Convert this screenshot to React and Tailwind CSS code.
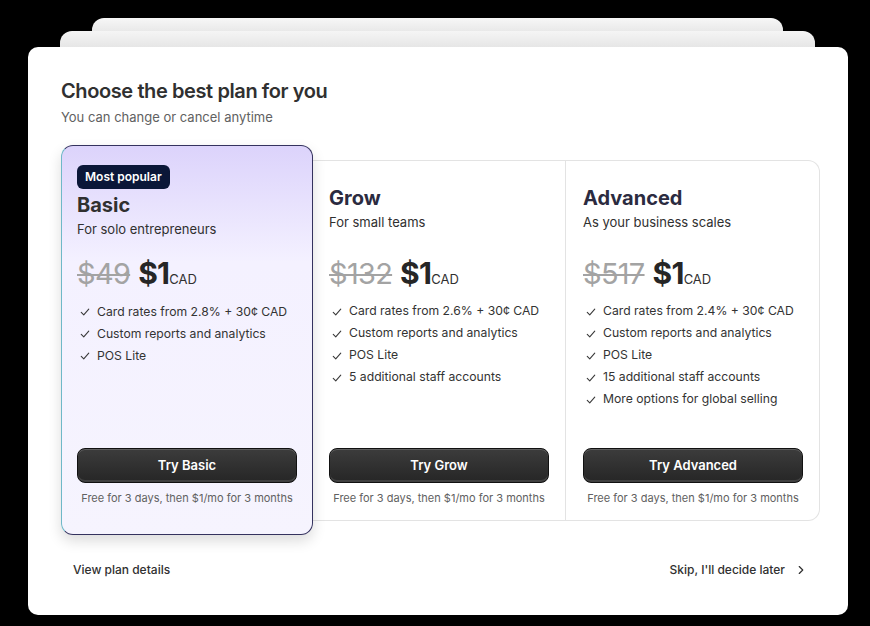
import React from "react";
import { ChevronRight } from "lucide-react";

const plans = [
  {
    name: "Grow",
    tagline: "For small teams",
    oldPrice: "$132",
    features: [
      "Card rates from 2.6% + 30¢ CAD",
      "Custom reports and analytics",
      "POS Lite",
      "5 additional staff accounts",
    ],
  },
  {
    name: "Advanced",
    tagline: "As your business scales",
    oldPrice: "$517",
    features: [
      "Card rates from 2.4% + 30¢ CAD",
      "Custom reports and analytics",
      "POS Lite",
      "15 additional staff accounts",
      "More options for global selling",
    ],
  },
];

function Tick() {
  return (
    <svg width="10" height="10" viewBox="0 0 12 12" fill="none" className="shrink-0">
      <path d="M1.5 6.5 L4.5 9.5 L10.5 2.5" stroke="#3a3a3a" strokeWidth="1.3" strokeLinecap="round" strokeLinejoin="round" />
    </svg>
  );
}

function Price({ oldPrice }) {
  return (
    <div className="flex items-baseline h-9 leading-9">
      <span className="text-[29px] text-[#a3a3a3] line-through decoration-[1.5px] tracking-tight">{oldPrice}</span>
      <span className="ml-2 text-[30px] font-bold text-[#262626] tracking-tight">$1</span>
      <span className="text-[13px] text-[#303030]">CAD</span>
    </div>
  );
}

function Features({ items }) {
  return (
    <ul className="mt-[10px] flex flex-col">
      {items.map((f) => (
        <li key={f} className="flex items-center gap-[7px] h-[22px] pl-[3px] text-[12.2px] text-[#333] whitespace-nowrap">
          <Tick />
          <span>{f}</span>
        </li>
      ))}
    </ul>
  );
}

function TryButton({ label }) {
  return (
    <div className="mt-auto">
      <button className="block w-full h-[35px] leading-none rounded-lg border border-[#111] bg-gradient-to-b from-[#3c3c3c] to-[#262626] text-white text-[13px] font-semibold shadow-[inset_0_1px_0_rgba(255,255,255,0.18),inset_0_-2px_0_rgba(255,255,255,0.12)]">
        {label}
      </button>
      <p className="mt-[7px] text-center text-[11px] leading-4 text-[#616161]">
        Free for 3 days, then $1/mo for 3 months
      </p>
    </div>
  );
}

export default function App() {
  return (
    <div className="min-h-screen w-full bg-black pt-[18px]" style={{ fontFamily: "Inter, 'Noto Sans', sans-serif" }}>
      <div className="ml-[92px] mr-[87px] h-[13px] rounded-t-xl bg-gradient-to-b from-[#f7f7f7] to-[#e9e9e9]" />
      <div className="ml-[60px] mr-[55px] h-[16px] rounded-t-xl bg-gradient-to-b from-[#f5f5f5] to-[#e6e6e6]" />
      <div className="ml-[28px] mr-[22px] h-[568px] rounded-[10px] bg-white pl-[33px] pr-[28px] pt-[30px]">
        <h1 className="text-[20px] leading-7 font-semibold text-[#303030] tracking-[-0.02em]">Choose the best plan for you</h1>
        <p className="mt-[2px] text-[13px] leading-5 text-[#616161]">You can change or cancel anytime</p>

        <div className="mt-[18px] flex items-center">
          {/* featured plan */}
          <div className="relative z-10 w-[252px] h-[390px] shrink-0 rounded-xl border border-[#34325e] border-l-[#6fb8c8] bg-gradient-to-b from-[#dcd3fb] via-[#f4f1ff] via-30% to-[#f6f4fe] shadow-[0_6px_14px_rgba(0,0,0,0.14)] flex flex-col px-[15px] pt-[19px] pb-[28px]">
            <span className="self-start h-6 px-[8px] rounded-md bg-[#0b1738] text-white text-[12px] font-semibold leading-6">Most popular</span>
            <h2 className="mt-[2px] text-[20px] leading-7 font-bold text-[#303030]">Basic</h2>
            <p className="text-[13px] leading-5 text-[#303030]">For solo entrepreneurs</p>
            <div className="mt-4">
              <Price oldPrice="$49" />
            </div>
            <Features items={["Card rates from 2.8% + 30¢ CAD", "Custom reports and analytics", "POS Lite"]} />
            <TryButton label="Try Basic" />
          </div>

          {/* other plans */}
          <div className="flex-1 h-[361px] -ml-px rounded-r-xl border border-l-0 border-[#e3e3e3] flex">
            {plans.map((p, i) => (
              <div
                key={p.name}
                className={`flex-1 flex flex-col pl-[17px] pr-4 pt-[23px] pb-[14px] ${i === 0 ? "" : "border-l border-[#e3e3e3]"}`}
              >
                <h2 className="text-[20px] leading-7 font-bold text-[#2b2b40]">{p.name}</h2>
                <p className="text-[13px] leading-5 text-[#303030]">{p.tagline}</p>
                <div className="mt-[23px]">
                  <Price oldPrice={p.oldPrice} />
                </div>
                <Features items={p.features} />
                <TryButton label={`Try ${p.name}`} />
              </div>
            ))}
          </div>
        </div>

        <div className="mt-[19px] flex items-center justify-between">
          <button className="h-8 px-3 text-[12px] font-medium text-[#303030]">View plan details</button>
          <button className="h-8 pl-3 pr-[12px] flex items-center gap-[9px] text-[12px] font-medium text-[#303030]">
            Skip, I'll decide later
            <ChevronRight size={14} strokeWidth={2} />
          </button>
        </div>
      </div>
    </div>
  );
}
